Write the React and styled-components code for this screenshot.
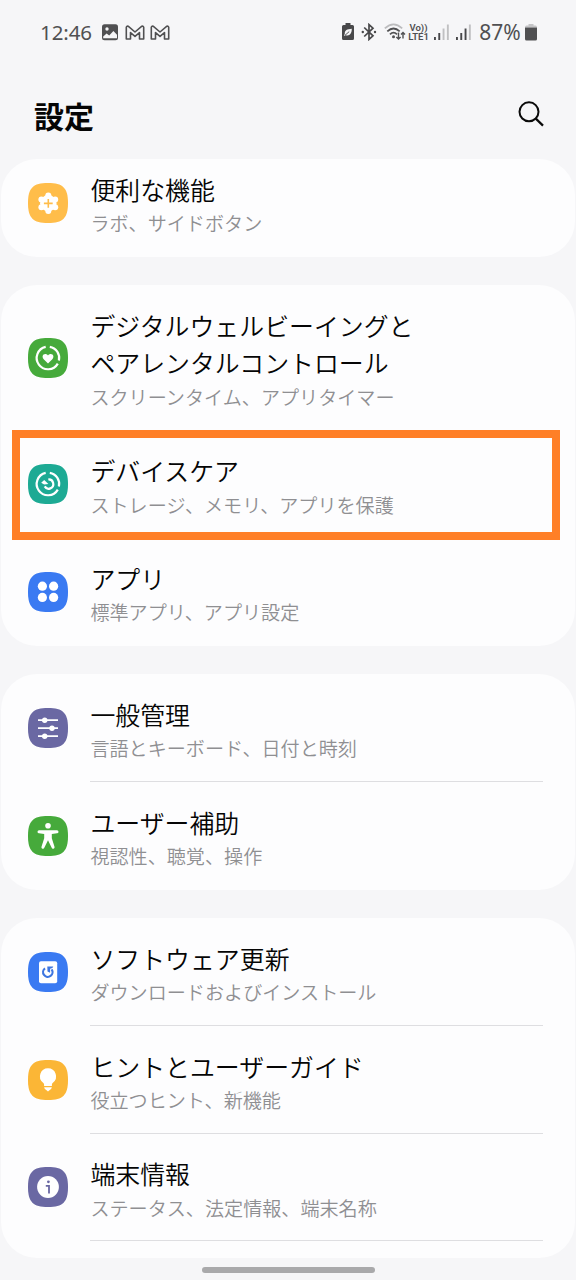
import styled, { createGlobalStyle } from "styled-components";

const GlobalStyle = createGlobalStyle`
  * {
    box-sizing: border-box;
  }
  body {
    margin: 0;
    background: #f6f6f8;
    font-family: "Noto Sans CJK JP", sans-serif;
    color: #050505;
  }
`;

const BellowsIcon = () => (
  <g fill="#fff">
    <circle cx="20.3" cy="20.3" r="8.2" />
    <circle cx="20.3" cy="12.6" r="3" />
    <circle cx="20.3" cy="28" r="3" />
    <circle cx="13.4" cy="16.4" r="3" />
    <circle cx="27.2" cy="16.4" r="3" />
    <circle cx="13.4" cy="24.2" r="3" />
    <circle cx="27.2" cy="24.2" r="3" />
    <path d="M20.3 16v8.8M15.9 20.4h8.8" stroke="#ffbd4a" strokeWidth="1.6" />
  </g>
);

const Ring = () => (
  <g fill="none" stroke="#fff" strokeWidth="2.2">
    <path d="M17.7 8.9A11.3 11.3 0 1 0 29.8 25.6" />
    <path d="M21.8 8.8A11.3 11.3 0 0 1 30.9 22.4" />
  </g>
);

const WellbeingIcon = () => (
  <>
    <Ring />
    <path
      d="M20 25.4l-4.3-4.2c-1.5-1.5-1.4-3.6-.2-4.6 1.4-1.2 3.4-.8 4.5.8 1.1-1.6 3.1-2 4.5-.8 1.2 1 1.3 3.1-.2 4.6z"
      fill="#fff"
    />
  </>
);

const CareIcon = () => (
  <>
    <Ring />
    <path
      d="M20.3 15.5a4.6 4.6 0 1 1-3.6 6.9"
      fill="none"
      stroke="#fff"
      strokeWidth="2.2"
    />
    <path d="M13.2 18.8l3-2.9 4.2 4.1-4.2.4z" fill="#fff" />
  </>
);

const AppsIcon = () => (
  <g fill="#fff">
    <circle cx="14.4" cy="14.2" r="4.6" />
    <circle cx="25.6" cy="14.2" r="4.6" />
    <circle cx="14.4" cy="25.4" r="4.6" />
    <circle cx="25.6" cy="25.4" r="4.6" />
  </g>
);

const SlidersIcon = () => (
  <g fill="#fff">
    <path d="M10 12.2h20M10 20.2h20M10 28.2h20" stroke="#fff" strokeWidth="1.8" />
    <circle cx="16.7" cy="12.2" r="2.7" />
    <circle cx="24" cy="20.2" r="2.7" />
    <circle cx="16.7" cy="28.2" r="2.7" />
  </g>
);

const PersonIcon = () => (
  <g fill="#fff">
    <circle cx="20" cy="9.8" r="2.8" />
    <path d="M11 14.2h18a1.3 1.3 0 0 1 0 3l-5.2.8v4.2l2.7 8.6a1.4 1.4 0 0 1-2.8.9L20 24.2l-3.7 7.5a1.4 1.4 0 0 1-2.8-.9l2.7-8.6V18l-5.2-.8a1.3 1.3 0 0 1 0-3z" />
  </g>
);

const UpdateIcon = () => (
  <>
    <rect x="11" y="9.2" width="18.2" height="22" rx="2" fill="#fff" />
    <path
      d="M17 16.400a4.700 4.700 0 1 0 6.600 1"
      fill="none"
      stroke="#3e76e0"
      strokeWidth="2.200"
    />
    <path d="M19.300 14.400h6l-.9 1.500-2.300.8v4l-2.600-1.200z" fill="#3e76e0" />
  </>
);

const BulbIcon = () => (
  <g fill="#fff">
    <path d="M20 8.3a8.1 8.1 0 0 1 4.9 14.5c-.8.7-1 1.3-1 2.2v.9h-7.8V25c0-.9-.2-1.5-1-2.2A8.1 8.1 0 0 1 20 8.3z" />
    <path d="M16.2 27.3h7.6c-.1 1.3-.8 2-1.7 2.4L20 31.6l-2.1-1.9c-.9-.4-1.6-1.1-1.7-2.4z" />
  </g>
);

const InfoIcon = () => (
  <>
    <circle cx="20" cy="20" r="10.9" fill="#fff" />
    <circle cx="20.4" cy="14.8" r="1.4" fill="#6a68a3" />
    <path d="M17.8 18.8h3.2v7.6" fill="none" stroke="#6a68a3" strokeWidth="1.8" />
  </>
);

const groups = [
  [
    {
      title: "便利な機能",
      sub: "ラボ、サイドボタン",
      color: "#ffbd4a",
      Icon: BellowsIcon,
    },
  ],
  [
    {
      title: "デジタルウェルビーイングと\nペアレンタルコントロール",
      sub: "スクリーンタイム、アプリタイマー",
      color: "#46aa3b",
      Icon: WellbeingIcon,
    },
    {
      title: "デバイスケア",
      sub: "ストレージ、メモリ、アプリを保護",
      color: "#1daa94",
      Icon: CareIcon,
      marked: true,
    },
    {
      title: "アプリ",
      sub: "標準アプリ、アプリ設定",
      color: "#3a7af2",
      Icon: AppsIcon,
    },
  ],
  [
    {
      title: "一般管理",
      sub: "言語とキーボード、日付と時刻",
      color: "#6a68a3",
      Icon: SlidersIcon,
      line: true,
    },
    {
      title: "ユーザー補助",
      sub: "視認性、聴覚、操作",
      color: "#46aa3b",
      Icon: PersonIcon,
    },
  ],
  [
    {
      title: "ソフトウェア更新",
      sub: "ダウンロードおよびインストール",
      color: "#3a7af2",
      Icon: UpdateIcon,
      line: true,
    },
    {
      title: "ヒントとユーザーガイド",
      sub: "役立つヒント、新機能",
      color: "#fbb636",
      Icon: BulbIcon,
      line: true,
    },
    {
      title: "端末情報",
      sub: "ステータス、法定情報、端末名称",
      color: "#6a68a3",
      Icon: InfoIcon,
      line: true,
    },
  ],
];

const NotificationIcons = () => (
  <svg width="70" height="20" viewBox="0 0 70 20">
    <rect x="1" y="2.2" width="16" height="16" rx="2.5" fill="#505052" />
    <circle cx="6" cy="7" r="1.7" fill="#f6f6f8" />
    <path d="M2.2 14.6l3.4-3.2 2.6 2.2 4.2-4.6 3.6 3.8v3.4H2.2z" fill="#f6f6f8" />
    {[24.5, 49.5].map((x) => (
      <path
        key={x}
        transform={`translate(${x} 3)`}
        d="M.8 14V2.4Q1 .8 2.6 1.2L9.5 7 16.4 1.2Q18 .8 18.2 2.4V14H14V7.6L9.5 11.4 5 7.6V14z"
        fill="none"
        stroke="#505052"
        strokeWidth="1.6"
        strokeLinejoin="round"
      />
    ))}
  </svg>
);

const BatterySaver = () => (
  <svg width="12" height="18" viewBox="0 0 12 18">
    <path
      d="M3.5 0h5v2H10.5Q12 2 12 3.5V15.500Q12 17 10.500 17H1.500Q0 17 0 15.500V3.500Q0 2 1.500 2H3.500z"
      fill="#48484a"
    />
    <path d="M9.8 5.8C5 6 2.6 7.600 2.800 10.400L2 13l1.700-.8C8 13.200 9.800 10.500 9.800 5.800z" fill="#f6f6f8" />
    <path d="M3 12.3L7.200 8.600" stroke="#48484a" strokeWidth=".9" />
  </svg>
);

const Bluetooth = () => (
  <svg width="16" height="18" viewBox="0 0 16 18">
    <path
      d="M3.2 4.5L12 12.8 8 16.4V1.6L12 5.2 3.2 13.5"
      fill="none"
      stroke="#48484a"
      strokeWidth="1.7"
    />
    <circle cx="1.8" cy="9" r="1.2" fill="#48484a" />
    <circle cx="14" cy="9" r="1.2" fill="#48484a" />
  </svg>
);

const Wifi = () => (
  <svg width="22" height="18" viewBox="0 0 22 18">
    <g fill="none" strokeWidth="1.8">
      <path d="M.8 5.4Q9.5-2.6 18.2 5.4" stroke="#bcbcbe" />
      <path d="M3.3 8.3Q9.5 2.6 15.7 8.3M6 11.3Q9.5 8 13 11.3" stroke="#505052" />
      <path
        d="M14.5 9.5v6.5M12.4 13.9l2.1 2.1 2.1-2.1M19 15.5V9.5M17 11.5l2-2 2 2"
        stroke="#505052"
        strokeWidth="1.4"
      />
    </g>
    <circle cx="9.5" cy="13.8" r="1.5" fill="#505052" />
  </svg>
);

const Signal = ({ level }) => (
  <svg width="15" height="16" viewBox="0 0 15 16">
    {[3, 7, 11.5, 15.5].map((h, i) => (
      <rect
        key={h}
        x={i * 4.3}
        y={16 - h}
        width="1.9"
        height={h}
        fill={i < level ? "#48484a" : "#c0c0c2"}
      />
    ))}
  </svg>
);

const Battery = () => (
  <svg width="12" height="17" viewBox="0 0 12 17">
    <path d="M3.5 0h5v1.5H10.5Q12 1.5 12 3.5H0Q0 1.5 1.5 1.5H3.5z" fill="#c4c4c6" />
    <path d="M0 3.5h12V15Q12 16.5 10.5 16.5H1.5Q0 16.5 0 15z" fill="#505052" />
  </svg>
);

const App = () => {
  return (
    <Screen>
      <GlobalStyle />
      <StatusBar>
        <Clock>12:46</Clock>
        <NotificationIcons />
        <StatusRight>
          <BatterySaver />
          <Bluetooth />
          <Wifi />
          <Volte>
            <span>Vo))</span>
            <span>LTE1</span>
          </Volte>
          <Signal level={2} />
          <Signal level={3} />
          <Percent>87%</Percent>
          <Battery />
        </StatusRight>
      </StatusBar>
      <Header>
        <h1>設定</h1>
        <svg width="28" height="28" viewBox="0 0 28 28">
          <circle cx="12" cy="11.8" r="9.5" fill="none" stroke="#0a0a0a" strokeWidth="2" />
          <path d="M18.8 18.6l7.2 7" stroke="#0a0a0a" strokeWidth="2.2" />
        </svg>
      </Header>
      <List>
        {groups.map((rows, i) => (
          <Card key={i} $clipped={i === 0} $last={i === groups.length - 1}>
            {rows.map(({ title, sub, color, Icon, line, marked }) => (
              <Row key={title}>
                <svg width="40" height="40" viewBox="0 0 40 40">
                  <path
                    d="M20 0C35 0 40 5 40 20S35 40 20 40 0 35 0 20 5 0 20 0z"
                    fill={color}
                  />
                  <Icon />
                </svg>
                <Label $line={line}>
                  <Title>{title}</Title>
                  <Sub>{sub}</Sub>
                </Label>
                {marked && <Marker />}
              </Row>
            ))}
          </Card>
        ))}
      </List>
      <HomeBar />
    </Screen>
  );
};

const Screen = styled.div`
  width: 576px;
  height: 1280px;
  display: flex;
  flex-direction: column;
  overflow: hidden;
  background: #f6f6f8;
`;

const StatusBar = styled.div`
  height: 64px;
  padding: 0 39px 0 40px;
  display: flex;
  align-items: center;
  font-family: "Noto Sans", sans-serif;
  color: #505052;
  svg {
    flex: none;
  }
`;

const Clock = styled.span`
  width: 61px;
  font-size: 20.5px;
  letter-spacing: -0.1px;
`;

const StatusRight = styled.div`
  margin-left: auto;
  display: flex;
  align-items: center;
  gap: 7px;
`;

const Volte = styled.div`
  width: 21px;
  margin: 0 -2px 0 -5px;
  display: flex;
  flex-direction: column;
  align-items: center;
  font-family: Roboto, sans-serif;
  font-size: 9.5px;
  font-weight: 600;
  line-height: 9.5px;
  white-space: nowrap;
`;

const Percent = styled.span`
  width: 44px;
  margin-right: -4px;
  text-align: center;
  font-size: 21px;
`;

const Header = styled.header`
  height: 95px;
  padding: 0 31px 0 34px;
  display: flex;
  align-items: center;
  justify-content: space-between;
  h1 {
    margin: 6px 0 0;
    font-size: 30px;
    font-weight: 700;
    line-height: 40px;
  }
  svg {
    margin-top: 5px;
  }
`;

const List = styled.main`
  display: flex;
  flex-direction: column;
  gap: 28.5px;
`;

const Card = styled.section`
  flex: none;
  margin: 0 1px;
  padding-bottom: ${(props) => (props.$last ? "17px" : "0")};
  border-radius: 36px;
  background: #fdfdfe;
  > div:first-child {
    margin-top: ${(props) => (props.$clipped ? "-10px" : "0")};
  }
`;

const Row = styled.div`
  position: relative;
  display: flex;
  align-items: center;
  padding: 0 32px 0 27px;
  gap: 22px;
  > svg {
    flex: none;
  }
`;

const Label = styled.div`
  flex: 1;
  padding: 21.7px 0 17.5px 0.4px;
  border-bottom: 1px solid ${(props) => (props.$line ? "#dedee1" : "transparent")};
`;

const Title = styled.div`
  font-size: 24.9px;
  font-weight: 350;
  line-height: 37.5px;
  white-space: pre-line;
`;

const Sub = styled.div`
  font-size: 19.1px;
  font-weight: 350;
  line-height: 30px;
  color: #8f8f92;
`;

const Marker = styled.div`
  position: absolute;
  top: 0;
  left: 11px;
  width: 548px;
  height: 110px;
  border: 8px solid #ff7f27;
`;

const HomeBar = styled.div`
  flex: none;
  width: 173px;
  height: 6px;
  margin: 9px auto 0;
  border-radius: 3px;
  background: #a9a9ab;
`;

export default App;
